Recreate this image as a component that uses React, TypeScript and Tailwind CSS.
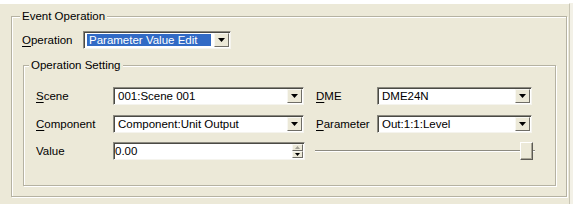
import React from "react";

const styles = {
  page: `w-[573px] h-[204px] bg-[#f3f1e7] font-['Liberation_Sans',Arial,sans-serif] text-[11.5px] text-black leading-[14px]`,
  panel: `w-[570px] h-[201px] mt-[3px] bg-[#ece9d8] border-t border-white border-r border-r-[#c8c5b4] pl-[11px]`,
  group: `border border-[#b5b2a2] shadow-[inset_1px_1px_0_#ffffff,1px_1px_0_#ffffff]`,
  legend: `px-[2px] bg-[#ece9d8] leading-[14px]`,
  sunken: `relative h-[18px] bg-white border border-t-[#8c8a80] border-l-[#8c8a80] border-b-[#f5f4ee] border-r-[#f5f4ee] shadow-[inset_1px_1px_0_#4a4a44]`,
  btn: `absolute right-[1px] top-[1px] bottom-[1px] w-[15px] bg-[#ece9d8] border border-t-[#f8f7f2] border-l-[#f8f7f2] border-b-[#6f6d66] border-r-[#6f6d66] flex items-center justify-center`,
};

const Arrow = ({ color = "#000" }: { color?: string }) => (
  <svg width="7" height="4" viewBox="0 0 7 4">
    <path d="M0 0h7L3.5 4z" fill={color} />
  </svg>
);

function Combo({ value, width, selected }: { value: string; width: string; selected?: boolean }) {
  return (
    <div className={`${styles.sunken} ${width}`}>
      {selected ? (
        <div className="absolute left-[3px] top-[2px] bottom-[2px] right-[19px] bg-[#316ac5] text-white pl-[2px] leading-[12px] whitespace-nowrap">
          {value}
        </div>
      ) : (
        <div className="pl-[4px] pt-[1px] whitespace-nowrap leading-[14px]">{value}</div>
      )}
      <div className={styles.btn}>
        <Arrow />
      </div>
    </div>
  );
}

const U = ({ c, rest }: { c: string; rest: string }) => (
  <span>
    <span className="underline underline-offset-[2px]">{c}</span>
    {rest}
  </span>
);

export default function App() {
  return (
    <div className={styles.page}>
      <div className={styles.panel}>
        <fieldset className={`${styles.group} w-[556px] mt-[5px] pl-[8px] pt-[8px] pb-[10px]`}>
          <legend className={styles.legend}>Event Operation</legend>
          <div className="flex items-center ml-[2px]">
            <div className="w-[61px]">
              <U c="O" rest="peration" />
            </div>
            <Combo value="Parameter Value Edit" width="w-[148px]" selected />
          </div>

          <fieldset className={`${styles.group} w-[533px] ml-[3px] mt-[9px] pl-[5px] pt-[15px] pb-[25px]`}>
            <legend className={styles.legend}>Operation Setting</legend>
            <div className="pl-[7px] flex flex-col gap-[10px]">
              <div className="flex items-center">
                <div className="w-[77px]">
                  <U c="S" rest="cene" />
                </div>
                <Combo value="001:Scene 001" width="w-[191px]" />
                <div className="w-[61px] ml-[12px]">
                  <U c="D" rest="ME" />
                </div>
                <Combo value="DME24N" width="w-[155px]" />
              </div>
              <div className="flex items-center">
                <div className="w-[77px]">
                  <U c="C" rest="omponent" />
                </div>
                <Combo value="Component:Unit Output" width="w-[191px]" />
                <div className="w-[61px] ml-[12px]">
                  <U c="P" rest="arameter" />
                </div>
                <Combo value="Out:1:1:Level" width="w-[155px]" />
              </div>
              <div className="flex items-center -mt-[1px]">
                <div className="w-[77px]">Value</div>
                <div className={`${styles.sunken} w-[192px]`}>
                  <div className="pl-[1px] pt-[1px] leading-[14px]">0.00</div>
                  <div className="absolute right-[1px] top-[1px] bottom-[1px] w-[11px] flex flex-col">
                    <div className="flex-1 bg-[#ece9d8] border border-t-[#f8f7f2] border-l-[#f8f7f2] border-b-[#6f6d66] border-r-[#6f6d66] flex items-center justify-center">
                      <svg width="5" height="3" viewBox="0 0 5 3">
                        <path d="M0 3h5L2.5 0z" fill="#a09e94" />
                      </svg>
                    </div>
                    <div className="flex-1 bg-[#ece9d8] border border-t-[#f8f7f2] border-l-[#f8f7f2] border-b-[#6f6d66] border-r-[#6f6d66] flex items-center justify-center">
                      <svg width="5" height="3" viewBox="0 0 5 3">
                        <path d="M0 0h5L2.5 3z" fill="#000" />
                      </svg>
                    </div>
                  </div>
                </div>
                <div className="relative ml-[10px] w-[220px] h-[18px] flex items-center">
                  <div className="w-full h-[2px] border-t border-[#8c8a80] border-b border-b-white" />
                  <div className="absolute right-[2px] top-0 w-[13px] h-[18px] bg-[#ece9d8] border border-t-[#ffffff] border-l-[#ffffff] border-b-[#5c5a54] border-r-[#5c5a54] shadow-[inset_-1px_-1px_0_#a8a596]" />
                </div>
              </div>
            </div>
          </fieldset>
        </fieldset>
      </div>
    </div>
  );
}
